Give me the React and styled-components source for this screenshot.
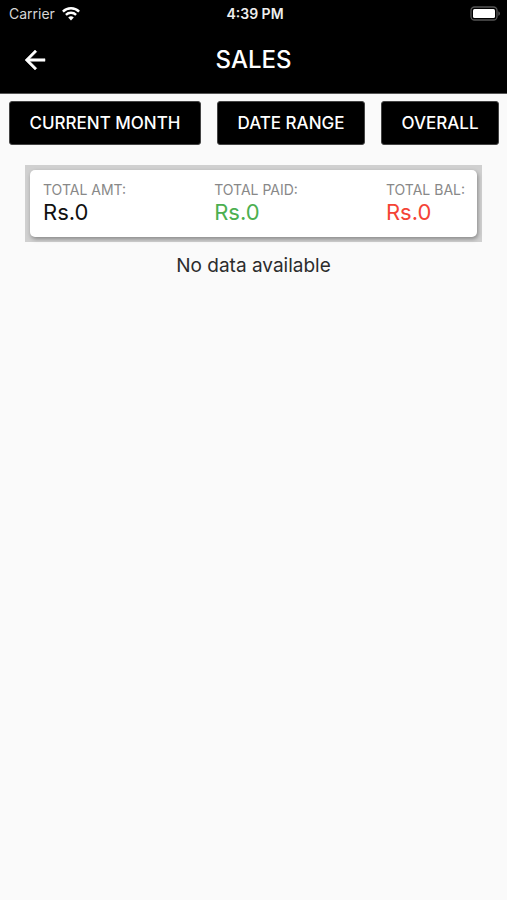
import styled, { createGlobalStyle } from 'styled-components';

const GlobalStyle = createGlobalStyle`
    * {
        box-sizing: border-box;
    }

    body {
        margin: 0;
        background: #fafafa;
        color: #2c2c2c;
        font-family: Inter, Roboto, sans-serif;
    }
`;

const HeaderStyles = styled.header`
    background: #000;
    color: #fff;
    border-bottom: 1px solid #555;
`;

const StatusBarStyles = styled.div`
    display: grid;
    grid-template-columns: 1fr auto 1fr;
    align-items: center;
    height: 27px;
    padding: 0 6px 0 9px;
    font-size: 14px;
    line-height: 20px;

    svg {
        display: block;
    }
`;

const CarrierStyles = styled.span`
    display: flex;
    align-items: center;
    gap: 7px;
    color: #d6d6d6;
`;

const TimeStyles = styled.time`
    font-weight: 600;
    color: #eee;
`;

const BatteryStyles = styled.span`
    justify-self: end;
`;

const AppBarStyles = styled.div`
    display: grid;
    grid-template-columns: 40px 1fr 40px;
    align-items: center;
    height: 66px;
    padding: 0 15px;
`;

const BackButtonStyles = styled.button`
    display: flex;
    align-items: center;
    justify-content: center;
    height: 40px;
    padding: 0;
    border: 0;
    background: none;
    color: #fff;
    cursor: pointer;
`;

const TitleStyles = styled.h1`
    margin: 0;
    font-size: 24px;
    font-weight: 500;
    line-height: 28px;
    text-align: center;
`;

const FiltersStyles = styled.nav`
    display: flex;
    gap: 16px;
    padding: 7px 8px 0 9px;
`;

const FilterButtonStyles = styled.button`
    flex: 1 1 auto;
    height: 44px;
    padding: 0;
    border: 1px solid #444;
    border-radius: 3px;
    background: #000;
    color: #fff;
    font-family: inherit;
    font-size: 17px;
    font-weight: 500;
    line-height: 24px;
    white-space: nowrap;
    cursor: pointer;
`;

const SummaryStyles = styled.section`
    margin: 20px 25px 0;
    padding: 5px;
    background: #d0d0d0;
`;

const CardStyles = styled.dl`
    display: flex;
    justify-content: space-between;
    margin: 0;
    padding: 10px 12px 12px 13px;
    border-radius: 5px;
    background: #fff;
    box-shadow: 1px 2px 4px rgba(0, 0, 0, 0.35);
`;

const LabelStyles = styled.dt`
    font-size: 14px;
    line-height: 20px;
    color: #888;
`;

const AmountStyles = styled.dd`
    margin: 0;
    font-size: 22px;
    line-height: 25px;
    color: ${({ $color }) => $color};
`;

const EmptyStyles = styled.p`
    margin: 12px 0 0;
    font-size: 19px;
    line-height: 24px;
    text-align: center;
`;

const filters = ['CURRENT MONTH', 'DATE RANGE', 'OVERALL'];

const totals = [
    { label: 'TOTAL AMT:', amount: 0, color: '#111' },
    { label: 'TOTAL PAID:', amount: 0, color: '#4caf50' },
    { label: 'TOTAL BAL:', amount: 0, color: '#f44336' },
];

const WifiIcon = () => (
    <svg width="18" height="14" viewBox="0 0 18 14" fill="none" stroke="#fff" strokeWidth="2.4" aria-hidden="true">
        <path d="M0.9 4.6a11.5 11.5 0 0 1 16.2 0" />
        <path d="M3.9 7.8a7.2 7.2 0 0 1 10.2 0" />
        <path d="M9 13.4 6.2 10.6a4 4 0 0 1 5.6 0z" fill="#fff" stroke="none" />
    </svg>
);

const BatteryIcon = () => (
    <svg width="31" height="15" viewBox="0 0 31 15" aria-hidden="true">
        <rect x="1" y="1" width="26" height="13" rx="3.5" fill="none" stroke="#555" strokeWidth="1.3" />
        <rect x="3" y="3" width="22" height="9" rx="1.5" fill="#fff" />
        <path d="M28.3 5.2c2.2 1 2.2 3.6 0 4.6z" fill="#555" />
    </svg>
);

const BackIcon = () => (
    <svg width="30" height="30" viewBox="0 0 24 24" fill="#fff" stroke="#fff" strokeWidth="0.4" aria-hidden="true">
        <path d="M20 11H7.83l5.59-5.59L12 4l-8 8 8 8 1.41-1.41L7.83 13H20v-2z" />
    </svg>
);

const App = () => (
    <>
        <GlobalStyle />
        <HeaderStyles>
            <StatusBarStyles>
                <CarrierStyles>
                    Carrier
                    <WifiIcon />
                </CarrierStyles>
                <TimeStyles>4:39 PM</TimeStyles>
                <BatteryStyles>
                    <BatteryIcon />
                </BatteryStyles>
            </StatusBarStyles>
            <AppBarStyles>
                <BackButtonStyles type="button" aria-label="Back">
                    <BackIcon />
                </BackButtonStyles>
                <TitleStyles>SALES</TitleStyles>
            </AppBarStyles>
        </HeaderStyles>
        <main>
            <FiltersStyles>
                {filters.map((name) => (
                    <FilterButtonStyles key={name} type="button">
                        {name}
                    </FilterButtonStyles>
                ))}
            </FiltersStyles>
            <SummaryStyles>
                <CardStyles>
                    {totals.map(({ label, amount, color }) => (
                        <div key={label}>
                            <LabelStyles>{label}</LabelStyles>
                            <AmountStyles $color={color}>{`Rs.${amount}`}</AmountStyles>
                        </div>
                    ))}
                </CardStyles>
            </SummaryStyles>
            <EmptyStyles>No data available</EmptyStyles>
        </main>
    </>
);

export default App;
